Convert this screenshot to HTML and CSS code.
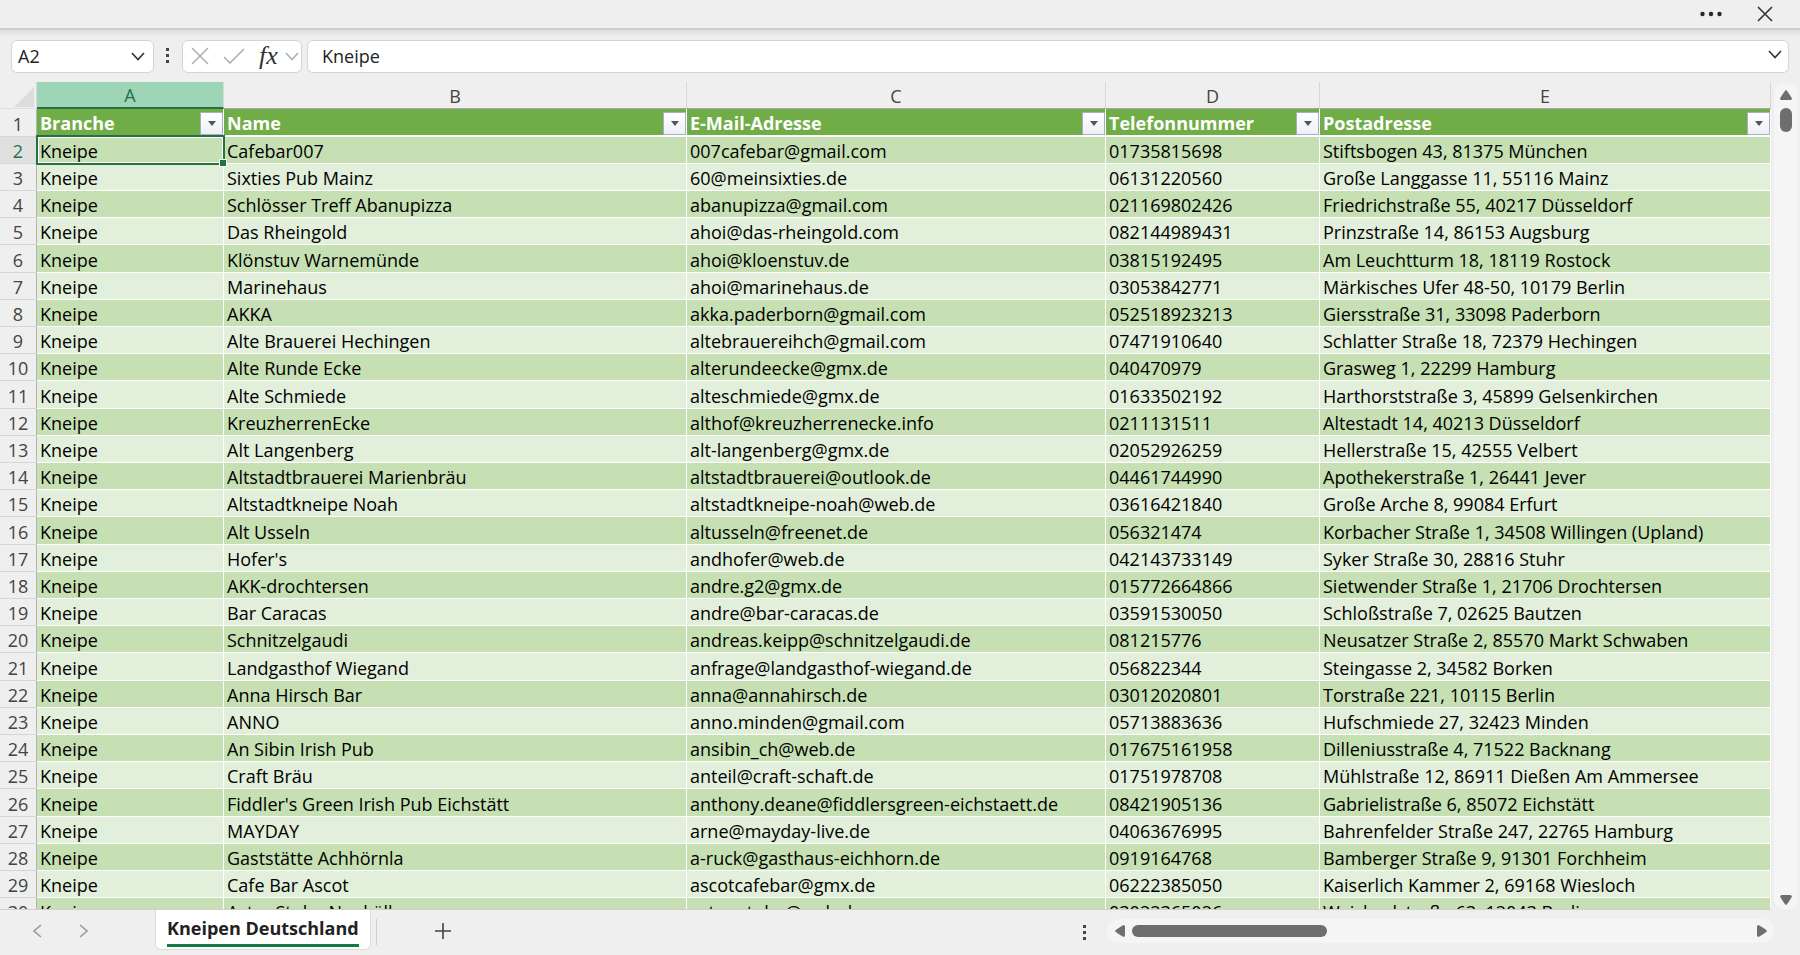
FILE: index.html
```
<!DOCTYPE html>
<html lang="de">
<head>
<meta charset="utf-8">
<title>Kneipen Deutschland</title>
<link rel="stylesheet" href="styles.css">
</head>
<body>
<div class="app">
  <header class="titlebar">
    <button class="icon-btn" aria-label="Mehr"><svg width="22" height="6" viewBox="0 0 22 6"><circle cx="2.5" cy="3" r="2.2"/><circle cx="11" cy="3" r="2.2"/><circle cx="19.5" cy="3" r="2.2"/></svg></button>
    <button class="icon-btn" aria-label="Schließen"><svg class="line" width="16" height="16" viewBox="0 0 16 16"><path d="M1 1 15 15M15 1 1 15"/></svg></button>
  </header>

  <div class="formula-row">
    <div class="box name-box">
      <input class="name-input" aria-label="Namenfeld" value="A2">
      <button class="icon-btn" aria-label="Namen anzeigen"><svg class="line" width="14" height="9" viewBox="0 0 14 9"><path d="M1 1 7 7.500 13 1"/></svg></button>
    </div>
    <svg class="grip" width="4" height="16" viewBox="0 0 4 16"><path d="M0 0h3v3H0zM0 6h3v3H0zM0 12h3v3H0z"/></svg>
    <div class="box fx-box">
      <button class="icon-btn wide" aria-label="Abbrechen"><svg class="line pale" width="18" height="18" viewBox="0 0 18 18"><path d="M1 1 17 17M17 1 1 17"/></svg></button>
      <button class="icon-btn wide" aria-label="Eingeben"><svg class="line pale" width="22" height="16" viewBox="0 0 22 16"><path d="M1 9 7 15 21 1"/></svg></button>
      <button class="icon-btn fx" aria-label="Funktion einfügen">fx</button>
      <button class="icon-btn" aria-label="Funktionen"><svg class="line pale" width="14" height="9" viewBox="0 0 14 9"><path d="M1 1 7 7.500 13 1"/></svg></button>
    </div>
    <div class="box formula-box">
      <input class="formula-input" aria-label="Bearbeitungsleiste" value="Kneipe">
      <button class="icon-btn expand" aria-label="Erweitern"><svg class="line" width="14" height="9" viewBox="0 0 14 9"><path d="M1 1 7 7.500 13 1"/></svg></button>
    </div>
  </div>

  <main class="main">
    <div class="sheet">
      <table class="grid">
        <colgroup><col class="c-num"><col class="c-a"><col class="c-b"><col class="c-c"><col class="c-d"><col></colgroup>
        <thead>
          <tr class="letters"><th class="corner"><svg width="20" height="20" viewBox="0 0 20 20"><path d="M20 0V20H0z"/></svg></th><th class="active">A</th><th>B</th><th>C</th><th>D</th><th>E</th></tr>
          <tr class="titles" id="titles"><th class="num">1</th></tr>
        </thead>
        <tbody id="rows"></tbody>
      </table>
    </div>
    <div class="vbar">
      <button class="icon-btn" aria-label="Nach oben"><svg width="12" height="10" viewBox="0 0 12 10"><path d="M6 0Q7 0 12 8.500Q12 10 10 10H2Q0 10 0 8.500Q5 0 6 0z"/></svg></button>
      <div class="vthumb"></div>
      <button class="icon-btn v-down" aria-label="Nach unten"><svg width="12" height="10" viewBox="0 0 12 10"><path d="M6 10Q7 10 12 1.500Q12 0 10 0H2Q0 0 0 1.500Q5 10 6 10z"/></svg></button>
    </div>
  </main>

  <footer class="footer">
    <nav class="tab-nav">
      <button class="icon-btn" aria-label="Vorheriges Blatt"><svg class="line grey" width="9" height="14" viewBox="0 0 9 14"><path d="M8 1 1 7 8 13"/></svg></button>
      <button class="icon-btn" aria-label="Nächstes Blatt"><svg class="line grey" width="9" height="14" viewBox="0 0 9 14"><path d="M1 1 8 7 1 13"/></svg></button>
    </nav>
    <button class="tab"><span class="tab-label">Kneipen Deutschland</span></button>
    <span class="tab-sep"></span>
    <button class="icon-btn add" aria-label="Neues Blatt"><svg class="line dark" width="16" height="16" viewBox="0 0 16 16"><path d="M8 0V16M0 8H16"/></svg></button>
    <svg class="grip foot-grip" width="4" height="16" viewBox="0 0 4 16"><path d="M0 0h3v3H0zM0 6h3v3H0zM0 12h3v3H0z"/></svg>
    <div class="hbar">
      <button class="icon-btn" aria-label="Nach links"><svg width="10" height="12" viewBox="0 0 10 12"><path d="M0 6Q0 5 8.500 0Q10 0 10 2V10Q10 12 8.500 12Q0 7 0 6z"/></svg></button>
      <div class="hthumb"></div>
      <button class="icon-btn h-right" aria-label="Nach rechts"><svg width="10" height="12" viewBox="0 0 10 12"><path d="M10 6Q10 5 1.500 0Q0 0 0 2V10Q0 12 1.500 12Q10 7 10 6z"/></svg></button>
    </div>
  </footer>
</div>
<script src="sheet.js"></script>
</body>
</html>
```

FILE: styles.css
```
* { box-sizing: border-box; }
body { margin: 0; background: #efefef; color: #000; font-family: "Open Sans", "Noto Sans", sans-serif; font-size: 18px; font-variant-ligatures: none; }
.app { display: flex; flex-direction: column; height: 100vh; overflow: hidden; }
.icon-btn { display: flex; align-items: center; justify-content: center; padding: 0; border: 0; background: none; font: inherit; fill: #262626; }
.line { fill: none; stroke: #333; stroke-width: 1.6; }
.pale { stroke: #b0b0b0; }
.grey { stroke: #999; }
.dark { stroke: #444; }
.grip { flex: none; fill: #444; }

.titlebar { display: flex; flex: none; align-items: center; justify-content: flex-end; gap: 35px; height: 28px; padding-right: 27px; }
.formula-row { display: flex; flex: none; align-items: center; height: 54px; padding: 0 11px; border-top: 2px solid #cdcdcd; box-shadow: inset 0 6px 6px -4px #d8d8d8; }
.box { display: flex; align-items: center; height: 33px; border: 1px solid #d4d4d4; border-radius: 6px; background: #fff; }
.name-box { width: 143px; padding: 0 8px 0 6px; }
.name-input, .formula-input { flex: 1; min-width: 0; padding: 0; border: 0; outline: 0; background: none; color: #222; font-family: inherit; font-size: 18px; }
.formula-row > .grip { margin: 0 12px; }
.fx-box { gap: 7px; width: 120px; padding: 0 4px 0 8px; }
.wide { margin-right: 7px; }
.fx { width: 20px; color: #333; font-family: "Liberation Serif", serif; font-size: 26px; font-style: italic; line-height: 26px; }
.formula-box { flex: 1; margin-left: 5px; padding: 0 6px 0 14px; }
.expand { padding-bottom: 4px; }

.main { display: flex; flex: 1; min-height: 0; }
.sheet { flex: 1; min-width: 0; overflow: hidden; border-bottom: 1px solid #d0d0d0; }
.grid { width: 100%; table-layout: fixed; border-collapse: separate; border-spacing: 0; line-height: 24px; }
.c-num { width: 37px; }
.c-a { width: 187px; }
.c-b { width: 463px; }
.c-c { width: 419px; }
.c-d { width: 214px; }
.grid th, .grid td { height: 27px; padding: 2px 3px 0; overflow: hidden; white-space: nowrap; }
.grid tbody tr:nth-child(5n) > * { height: 28px; }
.grid td { border-right: 1px solid #fff; border-bottom: 1px solid #fff; background: #e2efda; }
.grid tbody tr:nth-child(odd) td { background: #c6e0b4; }
.letters th { border-right: 1px solid #d8d8d8; border-bottom: 1px solid #a6a6a6; color: #444; font-weight: 400; }
.letters .active { border-bottom: 2px solid #217346; background: #9fd5b7; color: #217346; line-height: 23px; }
.grid .letters .corner { padding: 4px 3px 0 14px; border-bottom-color: #e0e0e0; }
.corner svg { display: block; fill: #dcdcdc; }
.grid .num { padding: 2px 0 0; border-right: 1px solid #b5b5b5; border-bottom: 1px solid #d6d6d6; background: #efefef; color: #444; font-weight: 400; }
.grid .num.active { background: #e0e0e0; color: #217346; }
.titles th { height: 28px; border-right: 1px solid #fff; border-bottom: 2px solid #fff; background: #70ad47; color: #fff; font-weight: 700; text-align: left; }
.titles .num { text-align: center; }
.title-cell { display: flex; align-items: center; justify-content: space-between; height: 24px; }
.filter { display: flex; align-items: center; justify-content: center; width: 23px; height: 23px; margin-right: -3px; padding: 0; border: 1px solid #a9aebf; background: linear-gradient(#fff, #eef0f6); fill: #555; }
.grid td.selected { position: relative; overflow: visible; }
.selected::before { content: ""; position: absolute; inset: -2px -2px -2px -1px; border: 2px solid #217346; box-shadow: inset 0 0 0 1px #fff; }
.selected::after { content: ""; position: absolute; right: -3px; bottom: -3px; width: 6px; height: 6px; background: #217346; outline: 1px solid #fff; }

.vbar { display: flex; flex: none; flex-direction: column; align-items: center; gap: 8px; width: 24px; margin: 1px 2px 0 3px; padding: 7px 0 5px; border-radius: 12px; background: #f5f5f5; }
.vbar .icon-btn, .hbar .icon-btn { fill: #6e6e6e; }
.vthumb { width: 12px; height: 24px; border-radius: 6px; background: #6e6e6e; }
.v-down { margin-top: auto; }

.footer { display: flex; flex: none; align-items: flex-start; height: 45px; padding-right: 21px; }
.tab-nav { display: flex; gap: 37px; width: 155px; padding: 14px 0 0 33px; }
.tab { height: 40px; padding: 0 11px; border: 1px solid #dedede; border-top: 0; border-radius: 0 0 6px 6px; background: #fff; color: #222; font-family: inherit; font-size: 18px; font-weight: 700; }
.tab-label { display: block; border-bottom: 3px solid #107c41; line-height: 32px; }
.tab-sep { width: 1px; height: 26px; margin: 9px 0 0 5px; background: #d0d0d0; }
.add { margin: 13px 0 0 58px; }
.foot-grip { margin: 15px 20px 0 auto; }
.hbar { display: flex; align-items: center; gap: 7px; width: 667px; height: 24px; margin: 9px 5px 0 0; padding: 0 7px 0 8px; border-radius: 12px; background: #f5f5f5; }
.hthumb { width: 195px; height: 12px; border-radius: 6px; background: #6e6e6e; }
.h-right { margin-left: auto; }
```

FILE: sheet.js
```
const titles = ["Branche", "Name", "E-Mail-Adresse", "Telefonnummer", "Postadresse"];
const data = `Cafebar007|007cafebar@gmail.com|01735815698|Stiftsbogen 43, 81375 München
Sixties Pub Mainz|60@meinsixties.de|06131220560|Große Langgasse 11, 55116 Mainz
Schlösser Treff Abanupizza|abanupizza@gmail.com|021169802426|Friedrichstraße 55, 40217 Düsseldorf
Das Rheingold|ahoi@das-rheingold.com|082144989431|Prinzstraße 14, 86153 Augsburg
Klönstuv Warnemünde|ahoi@kloenstuv.de|03815192495|Am Leuchtturm 18, 18119 Rostock
Marinehaus|ahoi@marinehaus.de|03053842771|Märkisches Ufer 48-50, 10179 Berlin
AKKA|akka.paderborn@gmail.com|052518923213|Giersstraße 31, 33098 Paderborn
Alte Brauerei Hechingen|altebrauereihch@gmail.com|07471910640|Schlatter Straße 18, 72379 Hechingen
Alte Runde Ecke|alterundeecke@gmx.de|040470979|Grasweg 1, 22299 Hamburg
Alte Schmiede|alteschmiede@gmx.de|01633502192|Harthorststraße 3, 45899 Gelsenkirchen
KreuzherrenEcke|althof@kreuzherrenecke.info|0211131511|Altestadt 14, 40213 Düsseldorf
Alt Langenberg|alt-langenberg@gmx.de|02052926259|Hellerstraße 15, 42555 Velbert
Altstadtbrauerei Marienbräu|altstadtbrauerei@outlook.de|04461744990|Apothekerstraße 1, 26441 Jever
Altstadtkneipe Noah|altstadtkneipe-noah@web.de|03616421840|Große Arche 8, 99084 Erfurt
Alt Usseln|altusseln@freenet.de|056321474|Korbacher Straße 1, 34508 Willingen (Upland)
Hofer's|andhofer@web.de|042143733149|Syker Straße 30, 28816 Stuhr
AKK-drochtersen|andre.g2@gmx.de|015772664866|Sietwender Straße 1, 21706 Drochtersen
Bar Caracas|andre@bar-caracas.de|03591530050|Schloßstraße 7, 02625 Bautzen
Schnitzelgaudi|andreas.keipp@schnitzelgaudi.de|081215776|Neusatzer Straße 2, 85570 Markt Schwaben
Landgasthof Wiegand|anfrage@landgasthof-wiegand.de|056822344|Steingasse 2, 34582 Borken
Anna Hirsch Bar|anna@annahirsch.de|03012020801|Torstraße 221, 10115 Berlin
ANNO|anno.minden@gmail.com|05713883636|Hufschmiede 27, 32423 Minden
An Sibin Irish Pub|ansibin_ch@web.de|017675161958|Dilleniusstraße 4, 71522 Backnang
Craft Bräu|anteil@craft-schaft.de|01751978708|Mühlstraße 12, 86911 Dießen Am Ammersee
Fiddler's Green Irish Pub Eichstätt|anthony.deane@fiddlersgreen-eichstaett.de|08421905136|Gabrielistraße 6, 85072 Eichstätt
MAYDAY|arne@mayday-live.de|04063676995|Bahrenfelder Straße 247, 22765 Hamburg
Gaststätte Achhörnla|a-ruck@gasthaus-eichhorn.de|0919164768|Bamberger Straße 9, 91301 Forchheim
Cafe Bar Ascot|ascotcafebar@gmx.de|06222385050|Kaiserlich Kammer 2, 69168 Wiesloch
Astra Stube Neukölln|astra-stube@web.de|03022365026|Weichselstraße 63, 12043 Berlin`;

const arrow = '<svg width="8" height="5" viewBox="0 0 8 5"><path d="M0 0H8L4 5z"/></svg>';
document.getElementById("titles").insertAdjacentHTML("beforeend", titles.map(t =>
  `<th><div class="title-cell"><span>${t}</span><button class="filter" aria-label="${t} filtern">${arrow}</button></div></th>`).join(""));

document.getElementById("rows").innerHTML = data.split("\n").map((line, i) => {
  const cells = ["Kneipe", ...line.split("|")];
  const on = i === 0;
  return `<tr><th class="num${on ? " active" : ""}">${i + 2}</th>` +
    cells.map((c, j) => `<td${on && j === 0 ? ' class="selected"' : ""}>${c}</td>`).join("") + "</tr>";
}).join("");
```
